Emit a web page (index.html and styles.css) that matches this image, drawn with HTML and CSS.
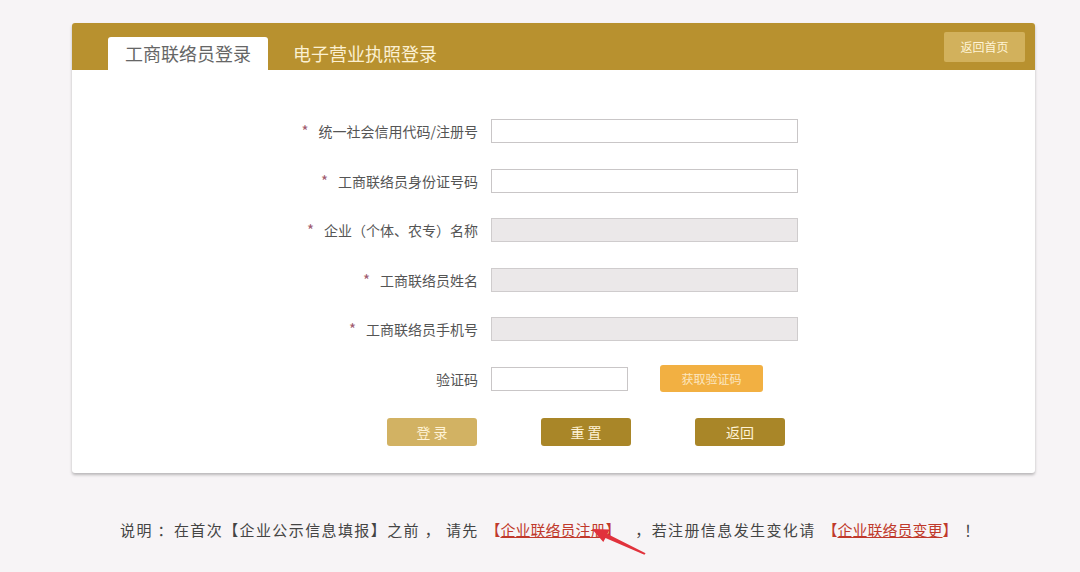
FILE: index.html
```html
<!DOCTYPE html>
<html lang="zh-CN">
<head>
  <meta charset="UTF-8" />
  <title>工商联络员登录</title>
  <link rel="stylesheet" href="styles.css">
</head>
<body>

  <!-- === Login Card === -->
  <div class="card">
    <div class="card-head">
      <div class="tabs">
        <span class="tab active">工商联络员登录</span>
        <span class="tab">电子营业执照登录</span>
      </div>
      <a href="#" class="home-btn">返回首页</a>
    </div>

    <div class="card-body">
      <div class="row">
        <label><span class="star">*</span>统一社会信用代码/注册号</label>
        <input type="text" />
      </div>
      <div class="row">
        <label><span class="star">*</span>工商联络员身份证号码</label>
        <input type="text" />
      </div>
      <div class="row">
        <label><span class="star">*</span>企业（个体、农专）名称</label>
        <input type="text" disabled />
      </div>
      <div class="row">
        <label><span class="star">*</span>工商联络员姓名</label>
        <input type="text" disabled />
      </div>
      <div class="row">
        <label><span class="star">*</span>工商联络员手机号</label>
        <input type="text" disabled />
      </div>
      <div class="row">
        <label>验证码</label>
        <div class="captcha">
          <input type="text" />
          <button class="code-btn">获取验证码</button>
        </div>
      </div>

      <div class="actions">
        <button class="btn btn-login">登 录</button>
        <button class="btn">重 置</button>
        <button class="btn">返回</button>
      </div>
    </div>
  </div>

  <!-- === Note === -->
  <div class="note-wrap">
    <p class="note">
      <span>说明 ：在首次【企业公示信息填报】之前 ， 请先</span>
      <a href="#" class="note-link">【<u>企业联络员注册</u>】</a>
      <span class="gap">，若注册信息发生变化请</span>
      <a href="#" class="note-link">【<u>企业联络员变更</u>】</a>
      <span>！</span>
    </p>
    <!-- red annotation arrow -->
    <svg class="arrow" width="70" height="40" viewBox="0 0 70 40">
      <polygon points="7,8 24.6,8.5 22.5,12.9 60.6,32.2 59.4,33.8 20.5,17.1 18.3,21" fill="#e1323c" />
    </svg>
  </div>

</body>
</html>
```

FILE: styles.css
```css
/* Basic Resets */
* { margin: 0; padding: 0; box-sizing: border-box; font-family: "Noto Sans CJK SC", "Liberation Sans", sans-serif; }
body { background-color: #f7f4f6; color: #444; padding-top: 23px; }

/* === Card === */
.card {
  width: 963px;
  margin-left: 72px;
  background: #fff;
  border-radius: 3px;
  box-shadow: 0 2px 3px rgba(0,0,0,0.25);
}
.card-head {
  height: 47px;
  background-color: #b8912f;
  border-radius: 3px 3px 0 0;
  display: flex;
  align-items: flex-end;
  justify-content: space-between;
  padding: 0 10px 0 36px;
}
.tabs { display: flex; align-items: flex-end; }
.tab {
  height: 33px;
  line-height: 33px;
  padding: 0 17px;
  font-size: 18px;
  color: #fbf0d2;
  margin-right: 8px;
}
.tab.active {
  background: #fff;
  color: #666;
  border-radius: 3px 3px 0 0;
}
.home-btn {
  align-self: center;
  width: 81px;
  height: 30px;
  line-height: 30px;
  text-align: center;
  font-size: 12px;
  color: #fff4d6;
  background-color: #d2b15c;
  border-radius: 2px;
  text-decoration: none;
}

/* === Form === */
.card-body { padding: 49px 0 27px; }
.row {
  display: grid;
  grid-template-columns: 406px 307px;
  column-gap: 13px;
  align-items: center;
  height: 24px;
  margin-bottom: 25.5px;
}
.row label {
  text-align: right;
  font-size: 14px;
  line-height: 24px;
  color: #555;
}
.star { color: #a05a6e; margin-right: 10px; font-size: 15px; }
.row input {
  width: 307px;
  height: 24px;
  border: 1px solid #c9c6c7;
  background: #fff;
}
.row input:disabled { background: #ebe8e9; border-color: #cfcccd; }
.captcha { display: flex; align-items: center; height: 24px; }
.captcha input { width: 137px; }
.code-btn {
  width: 103px;
  height: 27px;
  margin-left: 32px;
  border: none;
  border-radius: 3px;
  background-color: #f2b042;
  color: #fbe6c0;
  font-size: 12px;
}

.actions {
  display: flex;
  gap: 64px;
  padding-left: 315px;
  margin-top: 27.5px;
}
.btn {
  width: 90px;
  height: 28px;
  border: none;
  border-radius: 3px;
  background-color: #a98628;
  color: #fff3d6;
  font-size: 14px;
  cursor: pointer;
}
.btn-login { background-color: #d2b263; }

/* === Note === */
.note-wrap {
  position: relative;
  margin: 47px 0 0 120px;
  height: 40px;
}
.note {
  font-size: 15px;
  line-height: 20px;
  color: #444;
  white-space: nowrap;
  letter-spacing: 1.4px;
}
.note-link { color: #c0392b; text-decoration: none; letter-spacing: 0; margin: 0 2px; }
.note-link u { text-decoration: underline; }
.gap { margin-left: 8px; }
.arrow {
  position: absolute;
  left: 465px;
  top: 1px;
  overflow: visible;
}
```
